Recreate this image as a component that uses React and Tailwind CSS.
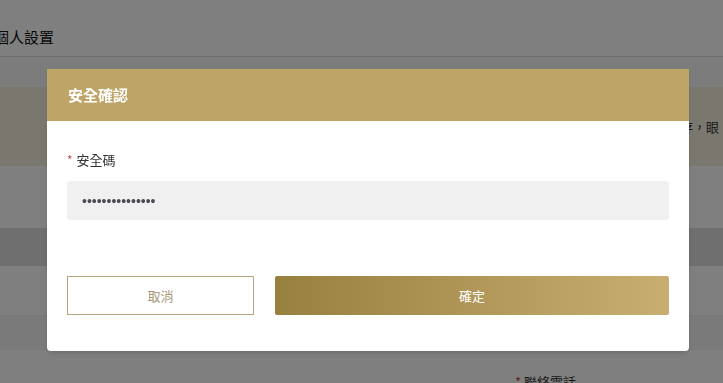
import { useState } from 'react';

const font = { fontFamily: '"Noto Sans CJK TC", "Noto Sans", sans-serif' };

const SecurityDialog = () => {
  const [code, setCode] = useState('123456789012345');

  return (
    <div className="fixed inset-0 bg-black/50">
      <div className="absolute left-[47px] top-[69px] w-[642px] bg-white rounded-b-[4px] overflow-hidden shadow-md">
        {/* Header */}
        <div className="h-[52px] bg-[#bfa467] flex items-center px-[21px]">
          <h2 className="text-[15px] font-bold text-white">安全確認</h2>
        </div>

        {/* Body */}
        <div className="px-5 pt-[29px] pb-[36px]">
          <label className="flex items-center text-[13px] text-[#333] leading-5 mb-[11px]">
            <span className="text-[#c44d4d] mr-1 text-[12px]">*</span>安全碼
          </label>
          <input
            type="password"
            value={code}
            onChange={(e) => setCode(e.target.value)}
            className="w-full h-[39px] px-[15px] bg-[#f0f0f0] rounded-[4px] text-[14px] text-[#4a4a55] outline-none font-['Liberation_Sans',Arial,sans-serif]"
          />

          <div className="flex gap-[21px] mt-[56px]">
            <button className="w-[187px] h-[39px] border border-[#b6a57f] bg-white text-[13px] text-[#a8977b]">
              取消
            </button>
            <button className="flex-1 h-[39px] rounded-[2px] bg-gradient-to-r from-[#98803f] to-[#c9ae72] text-[13px] text-white">
              確定
            </button>
          </div>
        </div>
      </div>
    </div>
  );
};

const App = () => {
  return (
    <div className="relative w-[723px] h-[383px] overflow-hidden bg-white" style={font}>
      {/* Page underneath */}
      <div className="h-[57px] border-b border-[#d8d8d8] flex items-end pb-[8px] -ml-[6px]">
        <span className="text-[15px] text-[#111]">個人設置</span>
      </div>
      <div className="h-[30px] bg-[#f8f8f8]" />
      <div className="h-[79px] bg-[#f4eedf] flex items-center justify-end pr-[4px]">
        <span className="text-[13px] text-[#333] whitespace-nowrap">存，眼</span>
      </div>
      <div className="h-[62px]" />
      <div className="h-[38px] bg-[#dedede]" />
      <div className="h-[50px] border-b border-[#eee]" />
      <div className="h-[34px] bg-[#f5f5f5]" />
      <div className="pl-[515px] pt-[22px] text-[13px] text-[#333]">
        <span className="text-[#c44d4d]">*</span> 聯絡電話
      </div>

      <SecurityDialog />
    </div>
  );
};

export default App;
